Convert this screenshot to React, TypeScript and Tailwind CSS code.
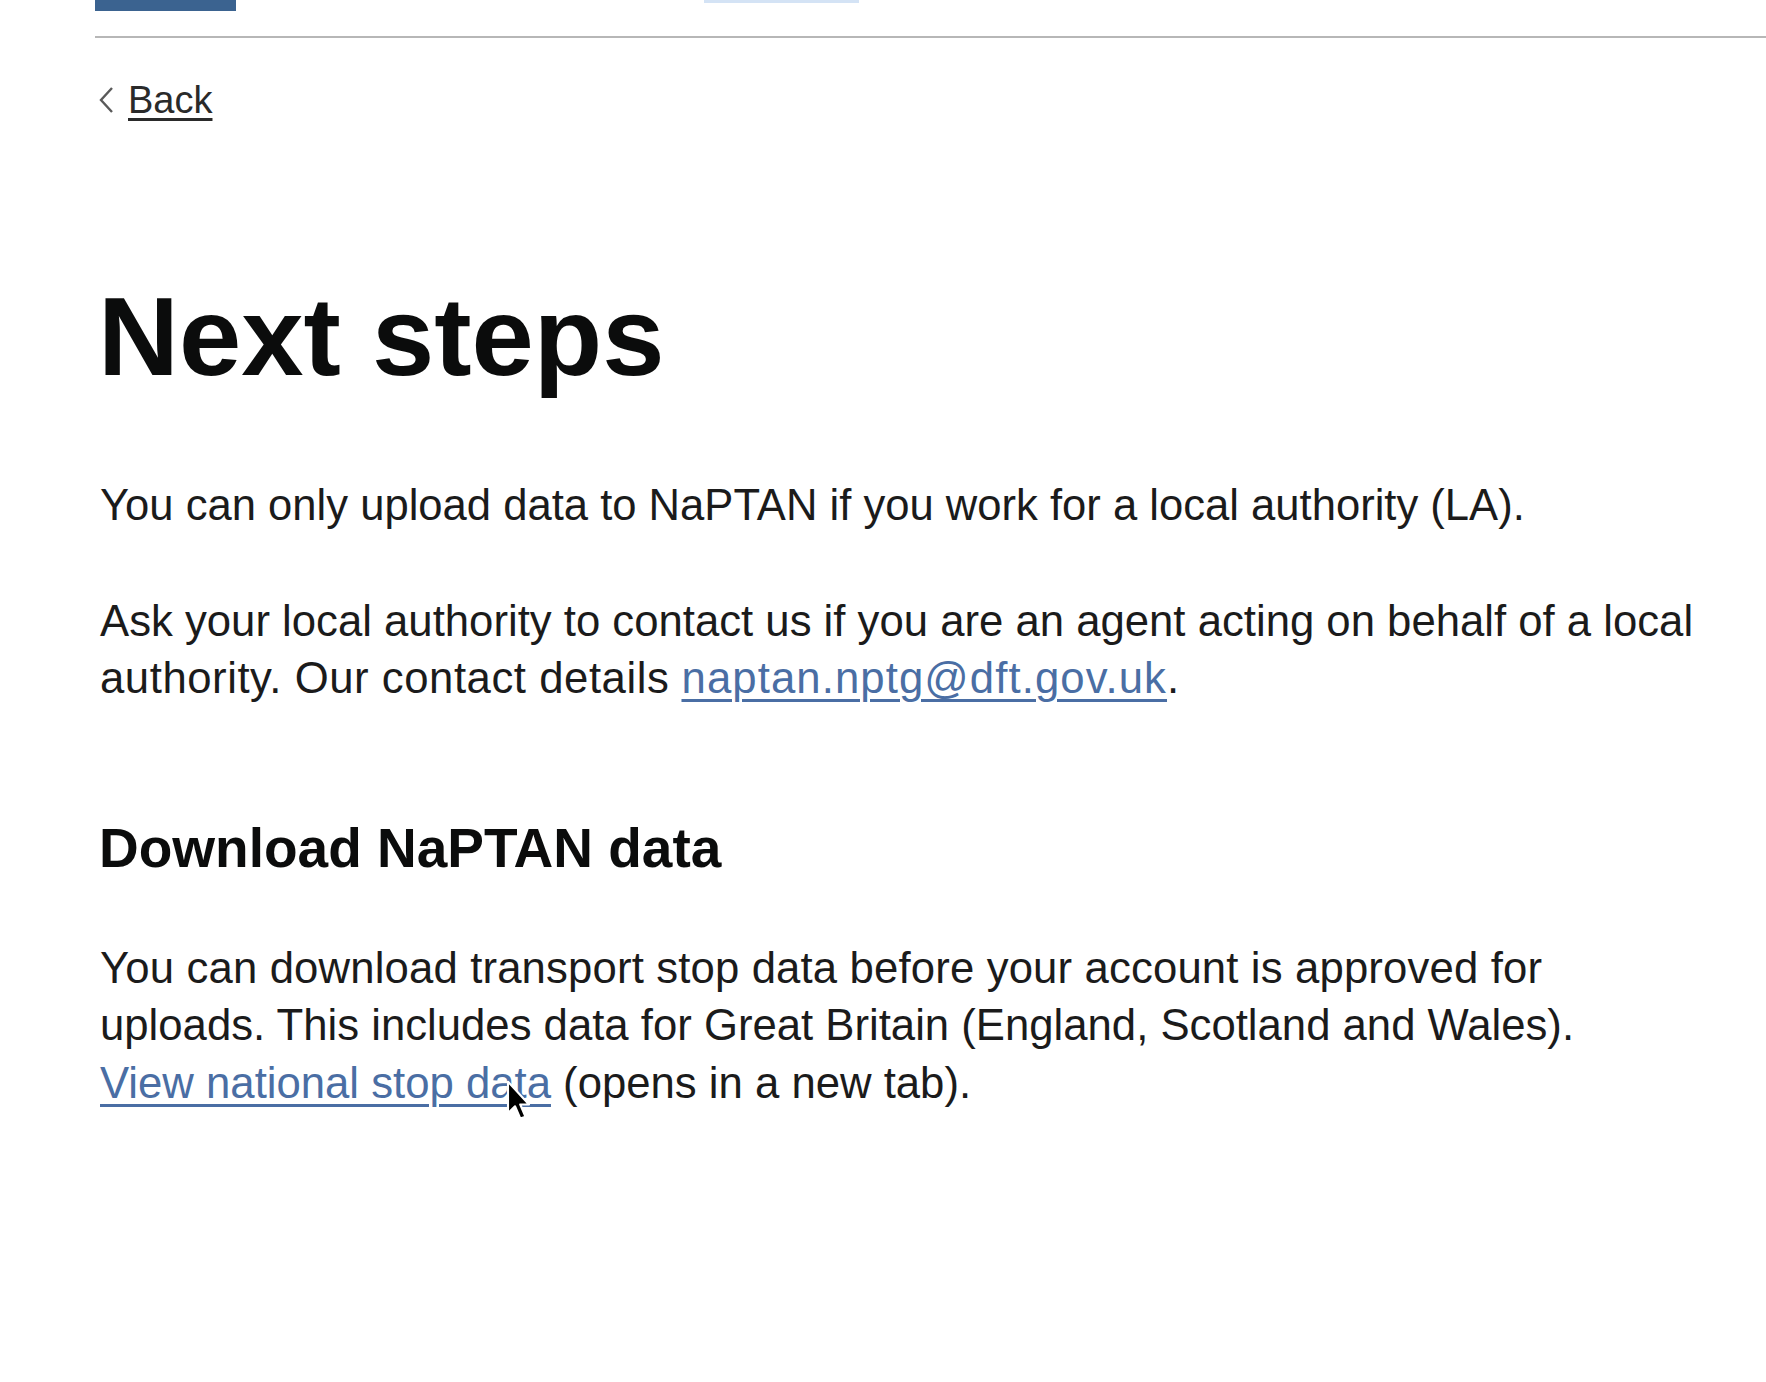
import React from "react";

/** NaPTAN "Next steps" page, GOV.UK style, shown zoomed in. */
export default function App() {
  return (
    <div className="relative min-h-screen bg-white font-['Liberation_Sans',Arial,sans-serif] text-[#1b1b1b]">
      <header className="ml-[95px] flex h-[38px] items-start border-b-2 border-[#b7b7b7]">
        <div className="h-[11px] w-[141px] bg-[#3b6390]" />
        <div className="ml-[468px] h-[3px] w-[155px] bg-[#d4e3f5]" />
      </header>

      <main className="pl-[95px]">
        <div className="mt-[38px] flex h-[48px] items-center text-[38px] leading-[48px]">
          <svg viewBox="0 0 16 28" className="ml-[3px] h-[28px] w-[16px]" aria-hidden>
            <path d="M14 2 L3 14 L14 26" fill="none" stroke="#5a5a5a" strokeWidth={2.4} />
          </svg>
          <a
            href="#"
            className="ml-[14px] text-[#2a2a2a] underline decoration-[3px] underline-offset-[5px]"
          >
            Back
          </a>
        </div>

        <h1 className="mt-[151px] ml-[3px] text-[112px] font-bold leading-[123px] text-[#0b0c0c]">
          Next steps
        </h1>

        <p className="mt-[79px] ml-[5px] text-[43.6px] leading-[57.5px]">
          You can only upload data to NaPTAN if you work for a local authority (LA).
        </p>

        <p className="mt-[57px] ml-[5px] text-[43.7px] leading-[57.5px]">
          Ask your local authority to contact us if you are an agent acting on behalf of a local
          <br />
          <span className="tracking-[0.55px]">authority. Our contact details</span>{" "}
          <a
            href="#"
            className="tracking-[1.1px] text-[#4a6ea4] underline decoration-[3px] underline-offset-[6px]"
          >
            naptan.nptg@dft.gov.uk
          </a>
          .
        </p>

        <h2 className="mt-[106px] ml-[4px] text-[55px] font-bold leading-[70px] text-[#0b0c0c]">
          Download NaPTAN data
        </h2>

        <p className="mt-[56px] ml-[5px] text-[43.7px] leading-[57.5px]">
          <span className="tracking-[0.15px]">
            You can download transport stop data before your account is approved for
          </span>
          <br />
          uploads. This includes data for Great Britain (England, Scotland and Wales).
          <br />
          <a
            href="#"
            className="text-[#4a6ea4] underline decoration-[3px] underline-offset-[6px]"
          >
            View national stop data
          </a>{" "}
          (opens in a new tab).
        </p>
      </main>

      {/* mouse pointer caught in the capture */}
      <svg
        viewBox="0 0 14 24"
        className="pointer-events-none absolute left-[506px] top-[1080px] h-[42px] w-[25px]"
        aria-hidden
      >
        <path
          d="M1 1 L1 19 L5 15 L8 22 L11 21 L8 14 L13 14 Z"
          fill="#000"
          stroke="#fff"
          strokeWidth={1.2}
          strokeLinejoin="round"
        />
      </svg>
    </div>
  );
}
